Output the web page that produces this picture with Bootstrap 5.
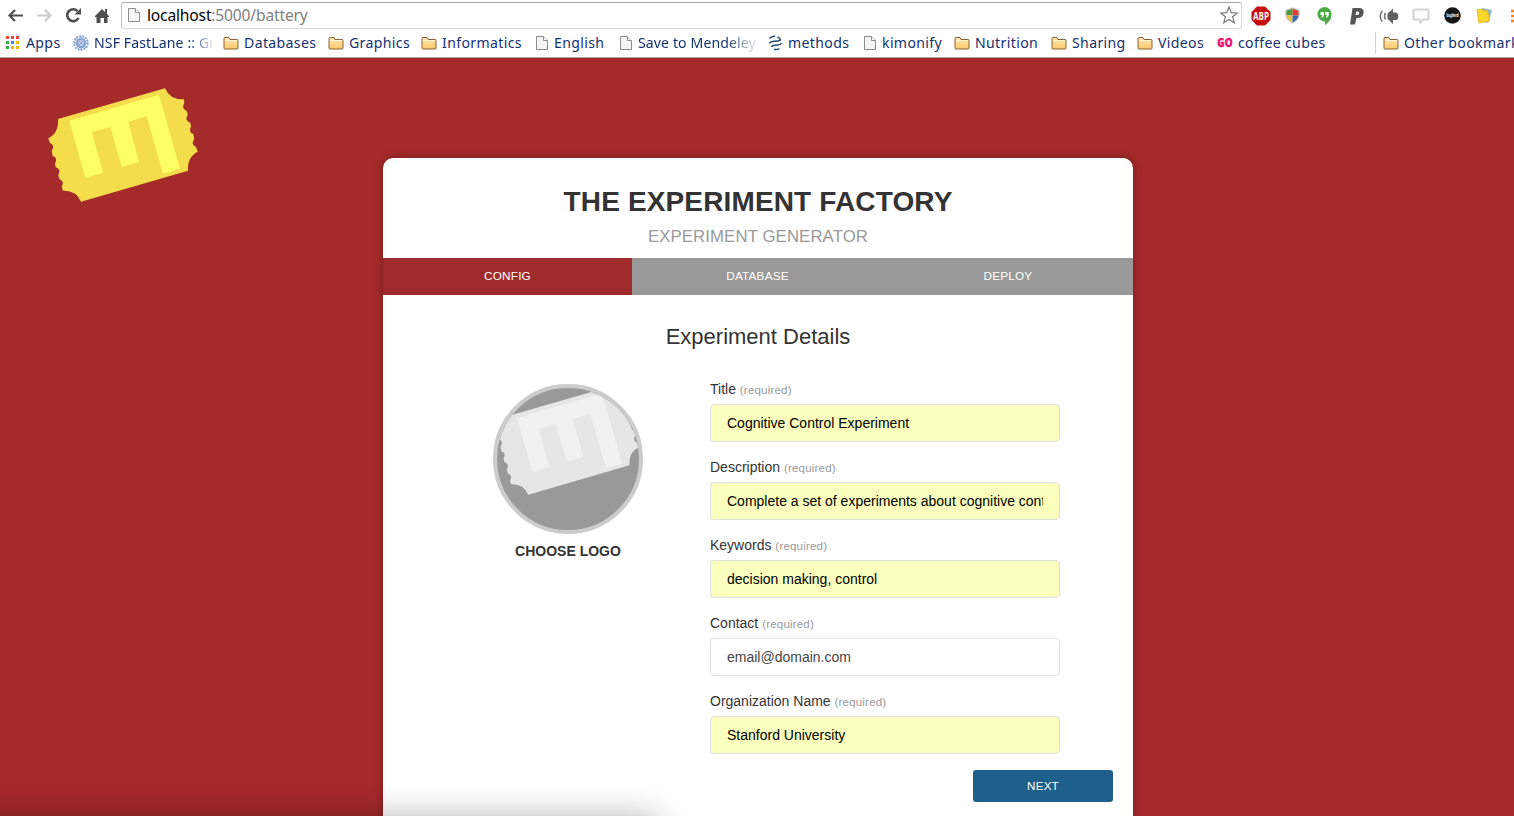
<!DOCTYPE html>
<html lang="en">
<head>
<meta charset="utf-8">
<title>The Experiment Factory</title>
<link href="https://cdn.jsdelivr.net/npm/bootstrap@5.3.0/dist/css/bootstrap.min.css" rel="stylesheet">
<style>
html,body{height:100%;overflow:hidden}
body{font-family:"Liberation Sans",Arial,sans-serif;font-size:14px;line-height:20px;color:#333;background:#a52a2a}
svg{display:block;flex:none}
/* browser chrome */
.chrome{height:58px;background:#fff;border-bottom:1px solid #b0a0a0;font-family:"Noto Sans",sans-serif}
.toolbar{height:29px;display:grid;grid-template-columns:29px 29px 29px 27px 1121px 1fr;padding:0 0 0 7px}
.urlbar{height:27px;margin-top:2px;border:1px solid #d9d9d9;border-top:1px solid #a6a6a6;border-left-color:#c2c2c2;border-radius:3px;padding:0 3px 2px 6px;font-size:15.6px;letter-spacing:-.17px;color:#808080}
.urlbar b{font-weight:400;color:#000}
.urlbar .page-icon{margin-right:7px}
.exts{display:grid;grid-template-columns:34px 32px 32px 30px 33px 32px 32px 35px 8px;margin-left:9px;padding-top:2px}
.bookmarks{height:27px;display:grid;grid-template-columns:67px 150px 105px 93px 115px 84px 148px 96px 90px 97px 86px 80px 158px 8px 150px;padding-left:6px;color:#15306f;font-size:14.1px;letter-spacing:.35px}
.bm{display:flex;align-items:center;white-space:nowrap}
.bm svg{margin-right:5px}
.bm.pg svg{margin-right:6px}
.bm .apps-icon{margin-right:7px}
.fade-a span{width:118px;overflow:hidden;letter-spacing:.1px;-webkit-mask-image:linear-gradient(90deg,#000 95px,transparent 122px)}
.fade-b span{width:118px;overflow:hidden;letter-spacing:.1px;-webkit-mask-image:linear-gradient(90deg,#000 88px,transparent 122px)}
.vsep{width:1px;height:22px;background:#c9d3e0}
/* page */
.stage{height:758px}
.ticket{margin:29px 0 0 48px;color:#f3dd4a;--m:#ff6}
.panel{width:750px;height:720px;margin:100px 0 0 185px;background:#fff;border-radius:10px 10px 0 0;box-shadow:0 0 9px rgba(0,0,0,.3);flex:none}
.panel h1{font-size:28px;line-height:34px;font-weight:700;letter-spacing:.14px;margin:0;padding-top:27px}
.sub{font-size:16.8px;line-height:20px;letter-spacing:.1px;color:#999;margin-top:8px}
.steps{margin-top:11px;height:37px;background:#999;color:#fff;font-size:11.8px;letter-spacing:.15px;line-height:36px;text-align:center;display:grid;grid-template-columns:249px 251px 250px}
.steps .on{background:#a02b2b}
.panel h2{font-size:22px;line-height:30px;margin:27px 0 0;font-weight:400}
.logo-col{width:150px;margin:16px 0 0 110px}
.caption{margin-top:7px}
.ring{width:150px;height:150px;border:4px solid #ccc;border-radius:50%;background:#999;overflow:hidden}
.ring svg{margin-top:-2px;color:#e6e6e6;--m:#f1f1f1}
.fields{width:350px;margin:8px 0 0 67px}
.fields label{display:block;height:28px;padding-top:3px;line-height:20px}
.fields label small{font-size:11.5px;letter-spacing:.2px;color:#999}
.fields .form-control{height:38px;border:1px solid #e0e0e0;border-radius:4px;padding:0 16px;font-size:14px;line-height:20px;color:#000;background:#faffbd;margin-bottom:12px}
.fields .form-control.plain{background:#fff;color:#444}
.next-btn{width:140px;height:32px;border:0;border-radius:3px;background:#1f5f8b;color:#fff;font-size:11.7px;letter-spacing:.15px;padding:0;margin:4px 20px 0 0}
/* shadow of the status bubble below the window edge */
.edge-shade{position:fixed;left:-60px;top:820px;width:717px;height:40px;box-shadow:0 0 34px 1px rgba(0,0,0,.34)}
</style>
</head>
<body>
<svg width="0" height="0" class="position-absolute"><defs>
<linearGradient id="gold" x2="0" y2="1"><stop offset="0" stop-color="#ffe9b8"/><stop offset="1" stop-color="#fcc868"/></linearGradient>
<symbol id="folder" viewBox="0 0 16 16"><path d="M1 13V3.500Q1 2.500 2 2.500H6L7 4.500H14Q15 4.500 15 5.500V13Q15 14 14 14H2Q1 14 1 13Z" fill="url(#gold)" stroke="#8a6238"/><path d="M2 5.500H14" stroke="#fff3d0"/></symbol>
<symbol id="page" viewBox="0 0 12 16"><path d="M.5 1.500H7.500L11.500 5.500V14.500H.5Z" fill="#f5f5f5" stroke="#8d8d8d"/><path d="M7.500 1.500V5.500H11.500" fill="#fff" stroke="#8d8d8d"/></symbol>
<symbol id="tick" viewBox="0 0 150 116">
<path fill="currentColor" d="M10 32L117 1.300Q122 13 136 12.300L136.300 16.300Q133 21.500 138.700 24L139.700 28Q136.300 33.500 142.300 35.700L143 39.700Q140 45.500 145.300 47L146.300 52Q142.500 57.500 148 60L149.700 64.700Q139 70 140 83.700L33 114.700Q28 103 15 103.700L13.700 99.700Q17 94.500 11.300 92L10.300 88Q13.700 82.500 7.700 80.300L7 76.300Q10 70.500 4.700 69L3.700 64Q7.500 58.500 2 56L.3 51.300Q11 46 10 32Z"/>
<path fill="var(--m)" d="M21.300 33.700L111 7.700L132 81.700L115 86.700L98.700 29.300L80.300 35L91 75L73.700 80L62.300 40L44 45L55 85.700L37.300 91Z"/></symbol>
</defs></svg>

<header class="chrome">
 <div class="toolbar align-items-center">
  <svg width="17" height="16" viewBox="0 0 17 16" fill="none" stroke="#505050" stroke-width="2.200"><path d="M16 8.500H3M8 3L2.500 8.500L8 14"/></svg>
  <svg width="17" height="16" viewBox="0 0 17 16" fill="none" stroke="#ccc" stroke-width="2.200"><path d="M1 8.500H14M9 3L14.500 8.500L9 14"/></svg>
  <svg width="17" height="16" viewBox="0 0 17 16"><path d="M13.500 11A6 6 0 1 1 12.500 4" fill="none" stroke="#505050" stroke-width="2.600"/><path d="M16 1V7.500H9.500Z" fill="#505050"/></svg>
  <svg width="17" height="16" viewBox="0 0 17 16" fill="#505050"><path d="M1 9L8 2L11 5V2H13V7L15 9V10H13.500V16H10V11H6.500V16H2.500V10H1Z"/></svg>
  <div class="urlbar d-flex align-items-center">
   <svg width="12" height="16" class="page-icon"><use href="#page"/></svg><span><b>localhost</b>:5000/battery</span>
   <svg class="ms-auto" width="18" height="18" viewBox="0 0 18 18"><path d="M9 1L11.300 6.700L17.300 7L12.600 10.800L14.300 16.800L9 13.400L3.700 16.800L5.400 10.800L.7 7L6.700 6.700Z" fill="#fff" stroke="#777" stroke-width="1.200"/></svg>
  </div>
  <div class="exts align-items-center">
   <svg width="20" height="20" viewBox="0 0 20 20"><path d="M6 .5H14L19.500 6V14L14 19.500H6L.5 14V6Z" fill="#c70d0d"/><text x="10" y="13.700" font-size="10" font-weight="700" fill="#fff" text-anchor="middle" textLength="16" lengthAdjust="spacingAndGlyphs" font-family="Open Sans">ABP</text></svg>
   <svg width="15" height="17" viewBox="0 0 16 18"><path d="M8 1L1 3.500V9H8Z" fill="#4f9a3a"/><path d="M8 1L15 3.500V9H8Z" fill="#d8432f"/><path d="M1 9H8V17Q2 14 1 9Z" fill="#f3bd35"/><path d="M15 9H8V17Q14 14 15 9Z" fill="#3268b5"/><path d="M8 1L1 3.500V9Q2 14 8 17Q14 14 15 9V3.500Z" fill="none" stroke="#c4c4c4" stroke-width="1.300"/></svg>
   <svg width="15" height="18" viewBox="0 0 15 18"><path d="M7.500 0A7 7 0 0 1 14.500 7.500Q14.300 14 8 18V14.500A7 7 0 1 1 7.500 0Z" fill="#4caa46"/><path d="M3.500 5H7V8L5.500 10.500H4.300L5 8H3.500ZM8.300 5H11.800V8L10.300 10.500H9L9.800 8H8.300Z" fill="#fff"/></svg>
   <svg width="16" height="18" viewBox="0 0 16 18"><path d="M3.500 1H10Q15.500 1 14.500 6.500Q13.500 11 8.500 11H7.500L6 17.500H1ZM7.500 4.500L6.500 8H8.500Q10.300 7.500 10.300 6Q10.300 4.500 8.500 4.500Z" fill="#555" fill-rule="evenodd"/></svg>
   <svg width="20" height="18" viewBox="0 0 20 18"><path d="M8.500 6.500Q9.500 6 14 1.500V17Q9.500 12.500 8.500 12ZM14 5.500H17.500Q19.300 6 19.300 9.300Q19.300 12.500 17.500 13H14Z" fill="#606060"/><path d="M6.500 6Q4.500 9.200 6.500 12.500M3.300 4Q-.8 9.200 3.300 14.500" fill="none" stroke="#707070" stroke-width="1.500"/></svg>
   <svg width="18" height="16" viewBox="0 0 18 16"><path d="M2.500 1.500H15.500Q16.500 1.500 16.500 2.500V10.500Q16.500 11.500 15.500 11.500H11L8.500 14.500L7.500 11.500H2.500Q1.500 11.500 1.500 10.500V2.500Q1.500 1.500 2.500 1.500Z" fill="#fff" stroke="#d5d5d5" stroke-width="2.200"/></svg>
   <svg width="17" height="17" viewBox="0 0 17 17"><circle cx="8.500" cy="8.500" r="8.300" fill="#171717"/><text x="8.500" y="10" text-anchor="middle" font-size="4.500" font-weight="700" fill="#fff" textLength="12" lengthAdjust="spacingAndGlyphs">bugherd</text></svg>
   <svg width="17" height="17" viewBox="0 0 17 17"><path d="M6 1L16 3L12 16L5 14Z" fill="#87b6c9"/><path d="M1 3L6 2L7 4L11.500 3.500L13.500 14L3 16Z" fill="#f9d72c" stroke="#e8bb20"/></svg>
   <svg width="8" height="14" viewBox="0 0 8 14" stroke="#ee8b23" stroke-width="2.400"><path d="M0 2H8M0 7H8M0 12H8"/></svg>
  </div>
 </div>
 <nav class="bookmarks">
  <div class="bm"><svg class="apps-icon" width="13" height="13" viewBox="0 0 13 13"><path fill="#e8453c" d="M0 0h3v3h-3zM5 0h3v3H5zM10 0h3v3h-3z"/><path fill="#3aa757" d="M0 5h3v3h-3zM0 10h3v3h-3z"/><path fill="#4285f4" d="M5 5h3v3H5z"/><path fill="#f5b400" d="M10 5h3v3h-3zM5 10h3v3H5zM10 10h3v3h-3z"/></svg><span>Apps</span></div>
  <div class="bm fade-a"><svg width="16" height="16" viewBox="0 0 16 16" fill="none" stroke="#8aa5cf"><circle cx="8" cy="8" r="6.800" stroke-width="2" stroke-dasharray="2 1"/><circle cx="8" cy="8" r="4" stroke-width="2.500"/><path d="M8 1V15M1 8H15M3 3L13 13M13 3L3 13"/></svg><span>NSF FastLane :: Gr</span></div>
  <div class="bm"><svg width="16" height="16"><use href="#folder"/></svg><span>Databases</span></div>
  <div class="bm"><svg width="16" height="16"><use href="#folder"/></svg><span>Graphics</span></div>
  <div class="bm"><svg width="16" height="16"><use href="#folder"/></svg><span>Informatics</span></div>
  <div class="bm pg"><svg width="12" height="16"><use href="#page"/></svg><span>English</span></div>
  <div class="bm pg fade-b"><svg width="12" height="16"><use href="#page"/></svg><span>Save to Mendeley</span></div>
  <div class="bm"><svg width="15" height="16" viewBox="0 0 15 16" fill="none" stroke="#2c4a68" stroke-width="1.500"><path d="M1.500 3.500Q4 .8 7 1.300M9.500 2Q12 3 12.500 5Q10 6.500 6 6.300Q2.500 6.500 1.500 8.500M13.500 8Q12.500 10.300 9 10Q4.500 10 3.500 12M6 14.200Q9 15.300 11.500 13.500"/></svg><span>methods</span></div>
  <div class="bm pg"><svg width="12" height="16"><use href="#page"/></svg><span>kimonify</span></div>
  <div class="bm"><svg width="16" height="16"><use href="#folder"/></svg><span>Nutrition</span></div>
  <div class="bm"><svg width="16" height="16"><use href="#folder"/></svg><span>Sharing</span></div>
  <div class="bm"><svg width="16" height="16"><use href="#folder"/></svg><span>Videos</span></div>
  <div class="bm"><svg width="16" height="16" viewBox="0 0 16 16"><text x=".3" y="12.200" font-family="Open Sans" font-size="11.500" font-weight="800" letter-spacing="0" stroke="#ed1373" stroke-width=".3" fill="#ed1373" textLength="15.300" lengthAdjust="spacingAndGlyphs">GO</text></svg><span>coffee cubes</span></div>
  <div class="vsep align-self-center"></div>
  <div class="bm"><svg width="16" height="16"><use href="#folder"/></svg><span>Other bookmarks</span></div>
 </nav>
</header>

<main class="stage d-flex align-items-start overflow-hidden">
 <svg class="ticket" width="150" height="116"><use href="#tick"/></svg>
 <section class="panel">
  <h1 class="text-center">THE EXPERIMENT FACTORY</h1>
  <div class="sub text-center">EXPERIMENT GENERATOR</div>
  <div class="steps"><div class="on">CONFIG</div><div>DATABASE</div><div>DEPLOY</div></div>
  <h2 class="text-center">Experiment Details</h2>
  <div class="d-flex align-items-start mt-3">
   <div class="logo-col">
    <div class="ring"><svg width="142" height="110"><use href="#tick"/></svg></div>
    <div class="caption fw-bold text-center">CHOOSE LOGO</div>
   </div>
   <form class="fields">
    <label>Title <small>(required)</small></label>
    <input class="form-control" value="Cognitive Control Experiment">
    <label>Description <small>(required)</small></label>
    <input class="form-control" value="Complete a set of experiments about cognitive control">
    <label>Keywords <small>(required)</small></label>
    <input class="form-control" value="decision making, control">
    <label>Contact <small>(required)</small></label>
    <input class="form-control plain" value="email@domain.com">
    <label>Organization Name <small>(required)</small></label>
    <input class="form-control" value="Stanford University">
   </form>
  </div>
  <div class="d-flex justify-content-end"><button class="btn next-btn">NEXT</button></div>
 </section>
</main>
<div class="edge-shade"></div>
</body>
</html>
